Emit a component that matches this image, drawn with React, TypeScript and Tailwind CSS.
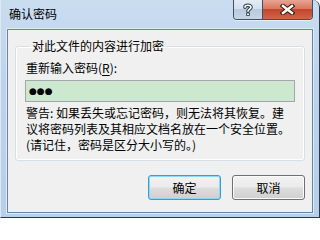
import clsx from 'clsx';

// Win7 style caption buttons (help + close)
function CaptionButtons() {
  return (
    <div className="flex h-[20px] mr-[6px] rounded-b-[4px] border border-t-0 border-[#3f5164] overflow-hidden shadow-[0_1px_0_#e4eef8]">
      <div className="w-[29px] h-full flex items-center justify-center border-r border-[#3f5164] bg-[linear-gradient(#e3ebf4_0%,#d3e0ee_45%,#b8cadd_50%,#c6d6e7_100%)]">
        <svg width="10" height="13" viewBox="0 0 10 13">
          <path d="M2 4.2 C2 1.8 8 1.6 8 4.2 C8 6.2 5 6 5 8.3" fill="none" stroke="#2c3a48" strokeWidth="3.6" strokeLinecap="round" />
          <rect x="3.2" y="9.6" width="3.6" height="3.2" fill="#2c3a48" />
          <path d="M2 4.2 C2 1.8 8 1.6 8 4.2 C8 6.2 5 6 5 8.3" fill="none" stroke="#ffffff" strokeWidth="1.6" strokeLinecap="round" />
          <rect x="4.1" y="10.4" width="1.8" height="1.6" fill="#ffffff" />
        </svg>
      </div>
      <div className="w-[49px] h-full flex items-center justify-center bg-[linear-gradient(#e8a595_0%,#d8785f_45%,#c5452c_50%,#d2644a_100%)]">
        <svg width="15" height="11" viewBox="0 0 15 11">
          <path d="M3 2 L12 9 M12 2 L3 9" stroke="#3b1a14" strokeWidth="4.6" strokeLinecap="square" />
          <path d="M3 2 L12 9 M12 2 L3 9" stroke="#ffffff" strokeWidth="2.4" strokeLinecap="square" />
        </svg>
      </div>
    </div>
  );
}

function DlgButton({ label, primary }: { label: string; primary?: boolean }) {
  return (
    <button
      type="button"
      className={clsx(
        'w-[73px] h-[25px] rounded-[3px] border text-[12px] leading-[16px] text-black',
        'bg-[linear-gradient(#f2f2f2_0%,#ebebeb_48%,#dddddd_52%,#cfcfcf_100%)]',
        primary
          ? 'border-[#3c9ad6] shadow-[inset_0_0_0_1px_#8fd6f7]'
          : 'border-[#707070] shadow-[inset_0_0_0_1px_#fbfbfb]'
      )}
    >
      {label}
    </button>
  );
}

export default function App() {
  return (
    <div
      className="w-[320px] h-[218px] overflow-hidden flex flex-col rounded-tr-[7px] border-r border-b border-[#2e3a48] border-l border-l-[#dde8f3] bg-[linear-gradient(#cadcf0_0%,#bcd3ec_40%,#b6cfea_100%)] text-black"
      style={{ fontFamily: '"Noto Sans CJK SC", "Noto Sans", sans-serif' }}
    >
      {/* title bar */}
      <div className="h-[29px] flex justify-between items-start shrink-0">
        <div className="pl-[8px] pt-[6px] text-[12px] leading-[16px]">确认密码</div>
        <CaptionButtons />
      </div>

      {/* client area */}
      <div className="mx-[6px] mb-[4px] flex-1 flex flex-col border border-[#6b84a3] bg-[#f0f0f0] shadow-[0_0_0_1px_#dfeaf6]">
        <fieldset className="mx-[7px] mt-[8px] border border-[#d5dfe5] rounded-[3px] pl-[9px] pr-[9px] pb-[7px] shadow-[inset_0_0_0_1px_#ffffff]">
          <legend className="ml-[5px] px-[2px] text-[12px] leading-[16px]">对此文件的内容进行加密</legend>
          <div className="mt-[6px] ml-[1px] text-[12px] leading-[16px]">
            重新输入密码(<span className="underline underline-offset-2">R</span>):
          </div>
          <div className="mt-[4px] h-[22px] border border-[#a3a7ad] bg-[#cce8cf] flex items-center pl-[3px]">
            <span className="text-[9px] leading-none text-black" style={{ fontFamily: '"DejaVu Sans", sans-serif' }}>
              ●●●
            </span>
          </div>
          <p className="mt-[3px] ml-[1px] text-[12px] leading-[16px] whitespace-nowrap">
            警告: 如果丢失或忘记密码，则无法将其恢复。建
            <br />
            议将密码列表及其相应文档名放在一个安全位置。
            <br />
            (请记住，密码是区分大小写的。)
          </p>
        </fieldset>

        <div className="mt-[14px] mr-[7px] flex justify-end gap-[11px]">
          <DlgButton label="确定" primary />
          <DlgButton label="取消" />
        </div>
      </div>
    </div>
  );
}
